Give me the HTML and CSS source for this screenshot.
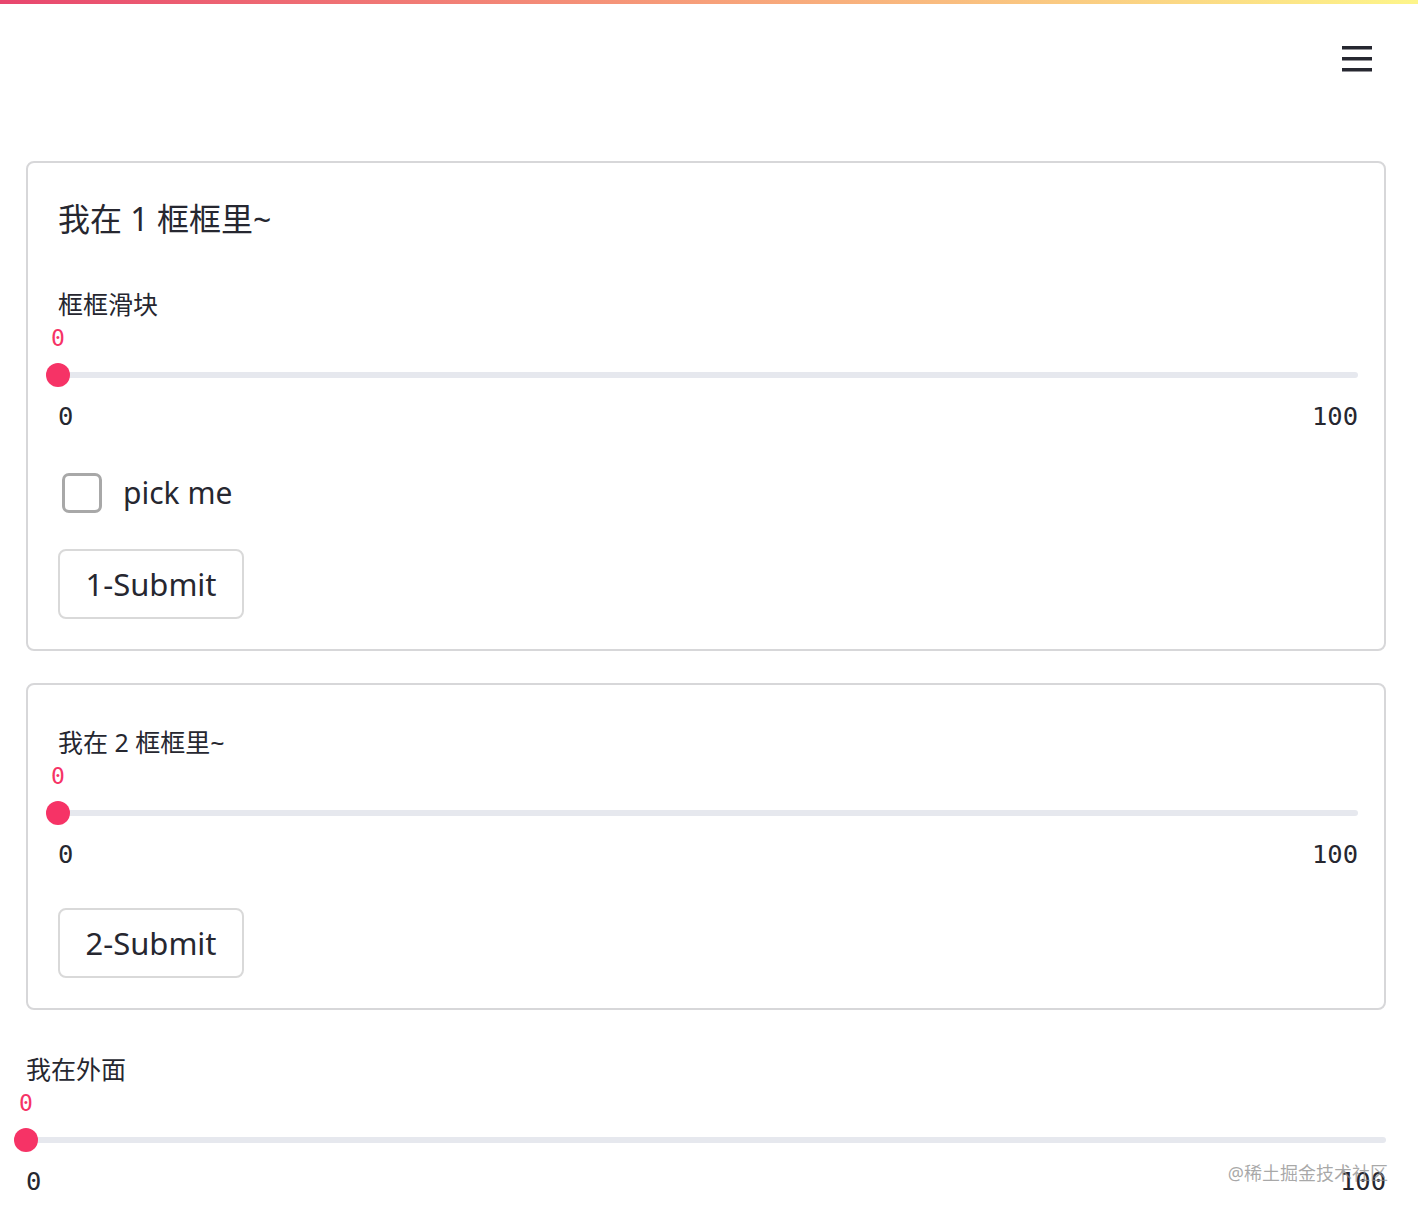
FILE: index.html
```html
<!DOCTYPE html>
<html lang="zh-CN">
<head>
<meta charset="utf-8">
<title>Streamlit</title>
<link rel="stylesheet" href="styles.css">
</head>
<body>
<div class="decoration"></div>
<header class="header">
  <button class="menu" aria-label="menu">
    <svg width="30" height="26" viewBox="0 0 30 26"><rect x="0" y="0" width="30" height="3.5" fill="#262730"/><rect x="0" y="11" width="30" height="3.5" fill="#262730"/><rect x="0" y="22" width="30" height="3.5" fill="#262730"/></svg>
  </button>
</header>
<main class="main">
  <section class="box box1">
    <h3 class="title">我在 1 框框里~</h3>
    <div class="slider slider-first">
      <div class="label">框框滑块</div>
      <div class="value-row"><span class="value">0</span></div>
      <div class="track-row"><div class="track"></div><div class="thumb"></div></div>
      <div class="minmax"><span>0</span><span>100</span></div>
    </div>
    <label class="checkbox"><span class="box-mark"></span><span class="cb-text">pick me</span></label>
    <button class="btn btn1">1-Submit</button>
  </section>
  <section class="box box2">
    <div class="slider">
      <div class="label">我在 2 框框里~</div>
      <div class="value-row"><span class="value">0</span></div>
      <div class="track-row"><div class="track"></div><div class="thumb"></div></div>
      <div class="minmax"><span>0</span><span>100</span></div>
    </div>
    <button class="btn btn2">2-Submit</button>
  </section>
  <div class="slider outside">
    <div class="label">我在外面</div>
    <div class="value-row"><span class="value">0</span></div>
    <div class="track-row"><div class="track"></div><div class="thumb"></div></div>
    <div class="minmax"><span>0</span><span>100</span></div>
  </div>
  <div class="watermark">@稀土掘金技术社区</div>
</main>
</body>
</html>
```
FILE: styles.css
```css
* { box-sizing: border-box; }
html, body { margin: 0; padding: 0; background: #fff; }
body {
  font-family: "Noto Sans", "Noto Sans CJK SC", sans-serif;
  color: #262730;
  width: 1418px;
  height: 1215px;
  overflow: hidden;
  position: relative;
}
.decoration {
  height: 4px;
  background: linear-gradient(90deg, #e8466e, #f7a07a 50%, #fdf58a);
}
.header {
  display: flex;
  justify-content: flex-end;
  padding: 42px 46px 0 0;
  height: 157px;
}
.menu {
  border: none;
  background: none;
  padding: 0;
  width: 30px;
  height: 26px;
  display: block;
}
.menu svg { display: block; }
.main {
  padding: 0 32px 0 26px;
  display: flex;
  flex-direction: column;
}
.box {
  border: 2px solid #d7d7d9;
  border-radius: 8px;
  padding: 0 26px 30px 30px;
  display: flex;
  flex-direction: column;
  align-items: flex-start;
}
.box1 { padding-top: 36px; }
.box2 { margin-top: 32px; padding-top: 41px; }
.title {
  margin: 0;
  font-weight: 400;
  font-size: 32px;
  line-height: 40px;
}
.slider { width: 100%; }
.slider-first { margin-top: 49px; }
.label {
  font-size: 25px;
  line-height: 32px;
}
.value-row {
  margin-top: 6px;
  height: 24px;
  position: relative;
}
.value {
  font-family: "DejaVu Sans Mono", "Liberation Mono", monospace;
  color: #f63366;
  font-size: 23px;
  line-height: 24px;
  display: inline-block;
  transform: translateX(-50%);
  position: relative;
}
.track-row {
  margin-top: 12px;
  height: 26px;
  position: relative;
  display: flex;
  align-items: center;
}
.track {
  width: 100%;
  height: 6px;
  border-radius: 3px;
  background: #e6e8ee;
}
.thumb {
  position: absolute;
  left: -12px;
  top: 1px;
  width: 24px;
  height: 24px;
  border-radius: 50%;
  background: #f63366;
}
.minmax {
  margin-top: 14px;
  display: flex;
  justify-content: space-between;
  font-family: "DejaVu Sans Mono", "Liberation Mono", monospace;
  font-size: 25.5px;
  line-height: 28px;
  color: #262730;
}
.checkbox {
  margin-top: 43px;
  margin-left: 4px;
  display: flex;
  align-items: center;
}
.box-mark {
  width: 40px;
  height: 40px;
  border: 3px solid #a8a8a8;
  border-radius: 7px;
  background: #fff;
}
.cb-text {
  margin-left: 21px;
  font-size: 30px;
  line-height: 40px;
}
.btn {
  font-family: "Noto Sans", "Noto Sans CJK SC", sans-serif;
  font-size: 31px;
  color: #262730;
  background: #fff;
  border: 2px solid #d9d9d9;
  border-radius: 8px;
  width: 186px;
  height: 70px;
  padding: 0;
}
.btn1 { margin-top: 36px; }
.btn2 { margin-top: 40px; }
.outside { margin-top: 43px; }
.watermark {
  position: absolute;
  right: 30px;
  top: 1161px;
  font-size: 18px;
  line-height: 24px;
  color: rgba(140,140,140,0.75);
}
```
